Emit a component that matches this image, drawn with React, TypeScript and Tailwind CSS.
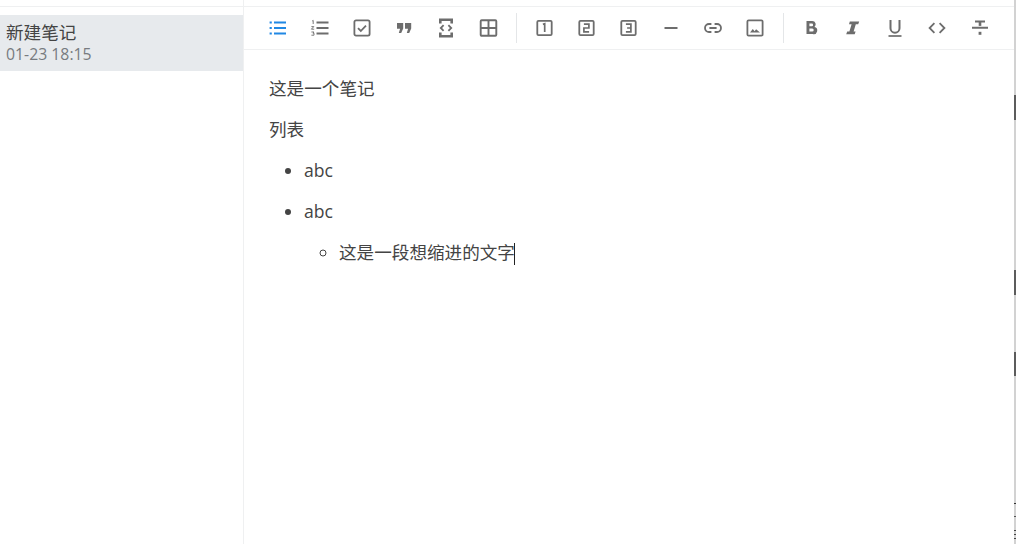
const font = { fontFamily: '"Open Sans", "Noto Sans CJK SC", sans-serif' };

function Ic({ children, blue }: { children: React.ReactNode; blue?: boolean }) {
  return (
    <button className={`flex h-[42px] w-[42.1px] shrink-0 items-center justify-center ${blue ? "text-[#2188e4]" : "text-[#6d6d6d]"}`}>
      <svg viewBox="0 0 20 20" className="h-5 w-5" fill="none" stroke="currentColor" strokeWidth="1.8">
        {children}
      </svg>
    </button>
  );
}

function BoxNum({ d }: { d: string }) {
  return (
    <Ic>
      <rect x="2.3" y="2.8" width="14.4" height="14.4" rx="1.2" />
      <path d={d} strokeWidth="1.7" transform="translate(-0.5 0)" />
    </Ic>
  );
}

function Sep() {
  return <div className="mx-[6.5px] h-[30px] w-px shrink-0 bg-[#e4e6e8]" />;
}

export default function App() {
  return (
    <div className="relative flex h-[544px] w-[1016px] overflow-hidden bg-white" style={font}>
      <aside className="w-[244px] shrink-0 border-r border-[#eff0f1] pt-[6px]">
        <div className="h-[9px] border-t border-[#eff0f1]" />
        <div className="h-[56px] w-[243px] bg-[#e7eaed] pl-[6px] pt-[5px]">
          <div className="text-[17.6px] leading-[24px] text-[#444]">新建笔记</div>
          <div className="text-[15.8px] leading-[20px] text-[#777b80]">01-23 18:15</div>
        </div>
      </aside>
      <main className="flex min-w-0 flex-1 flex-col">
        <div className="mt-[6px] flex h-[44px] items-center border-y border-[#eff0f1] pl-[13px]">
          <Ic blue>
            <path d="M6 4.5H18M6 10H18M6 15.5H18" strokeWidth="2" />
            <path d="M1.6 4.5h2.2M1.6 10h2.2M1.6 15.5h2.2" strokeWidth="2.2" />
          </Ic>
          <Ic>
            <path d="M6.5 4.5H18.5M6.5 10H18.5M6.5 15.5H18.5" strokeWidth="2" />
            <path d="M2.2 3l1-.6v3.6M1.4 8.6h2.4l-2.4 2.6h2.8M1.4 14h2.6l-1 1.2h1v2H1.4" strokeWidth="0.9" />
          </Ic>
          <Ic>
            <rect x="2.4" y="2.4" width="15.2" height="15.2" rx="1.6" />
            <path d="M6 10.2l2.8 2.8 5.2-5.4" />
          </Ic>
          <Ic>
            <path d="M3 5h6.2v5.6L7.2 15H4.8l1.3-4.2H3zM11 5h6.2v5.6L15.2 15h-2.4l1.3-4.2H11z" fill="currentColor" stroke="none" />
          </Ic>
          <Ic>
            <path d="M3 0.5h14v5h-2.6V3H5.6v2.5H3zM3 19.5h14v-5h-2.6V17H5.6v-2.5H3z" fill="currentColor" stroke="none" />
            <path d="M7.6 7.2L4.8 10l2.8 2.8M12.4 7.2l2.8 2.8-2.8 2.8" />
          </Ic>
          <Ic>
            <rect x="1.7" y="2.2" width="15.6" height="15.6" rx="1" strokeWidth="1.9" />
            <path d="M9.5 2.2v15.6M1.7 10h15.6" strokeWidth="1.9" />
          </Ic>
          <Sep />
          <BoxNum d="M8.4 6.4l1.8-.6V14" />
          <BoxNum d="M7.4 6.2h5v3.8h-5v3.8h5.2" />
          <BoxNum d="M7.4 6.2h5v7.6h-5M8.6 10h3.8" />
          <Ic>
            <path d="M3.5 10h13" strokeWidth="2" />
          </Ic>
          <Ic>
            <path d="M8.4 6H6a4 4 0 000 8h2.4M11.6 6H14a4 4 0 010 8h-2.4M6.4 10h7.2" />
          </Ic>
          <Ic>
            <rect x="2.4" y="2.4" width="15.2" height="15.2" rx="1.2" />
            <path d="M5 14.5l2.8-3.4 1.8 2.1 1.5-2 3.9 3.3z" fill="currentColor" stroke="none" />
          </Ic>
          <Sep />
          <Ic>
            <path d="M5.5 3h5.8a3.4 3.4 0 012.2 6 3.6 3.6 0 01-1.8 7H5.5zM8.4 5.6v2.6h2.4a1.3 1.3 0 000-2.6zM8.4 10.6v3h2.8a1.5 1.5 0 000-3z" fill="currentColor" stroke="none" fillRule="evenodd" />
          </Ic>
          <Ic>
            <path d="M6.8 3.5h9.4l-1 2.8h-2.4L10.6 13.4h2l-.9 2.8H3.2l1-2.8h2.2l2.2-7.1H6z" fill="currentColor" stroke="none" />
          </Ic>
          <Ic>
            <path d="M5.5 2v8.2a4.5 4.5 0 009 0V2" strokeWidth="2" />
            <path d="M3.5 18h13" strokeWidth="1.7" />
          </Ic>
          <Ic>
            <path d="M7.4 5.2L2.6 10l4.8 4.8M12.6 5.2l4.8 4.8-4.8 4.8" strokeWidth="1.8" />
          </Ic>
          <Ic>
            <path d="M5 3.5h10M2 9.8h16" strokeWidth="1.9" />
            <path d="M10 3.5v4.4" strokeWidth="2.6" />
            <path d="M10 13.8v3" strokeWidth="2.8" />
          </Ic>
        </div>
        <div className="flex-1 px-[25px] pt-[26px] text-[17.6px] leading-[24px] text-[#444]">
          <p className="mb-[17px]">这是一个笔记</p>
          <p className="mb-[17px]">列表</p>
          <ul className="list-disc pl-[35px]">
            <li className="mb-[17px]">abc</li>
            <li className="mb-[17px]">
              abc
              <ul className="mt-[17px] list-[circle] pl-[35px]">
                <li>
                  这是一段想缩进的文字
                  <span className="-ml-px inline-block h-[22px] w-px bg-[#222] align-middle" />
                </li>
              </ul>
            </li>
          </ul>
        </div>
      </main>
      {/* window edge strip with the dark marks */}
      <div className="absolute inset-y-0 right-0 w-[2px] bg-[#d2d2d2]">
        <div className="absolute top-[95px] h-[25px] w-full bg-[#5c5c5c]" />
        <div className="absolute top-[270px] h-[25px] w-full bg-[#5c5c5c]" />
        <div className="absolute top-[352px] h-[24px] w-full bg-[#5c5c5c]" />
        <div className="absolute top-[503px] h-px w-full bg-[#333]" />
        <div className="absolute top-[516px] h-px w-full bg-[#555]" />
        <div className="absolute top-[530px] h-px w-full bg-[#444]" />
        <div className="absolute top-[534px] h-px w-full bg-[#444]" />
        <div className="absolute top-[538px] h-px w-full bg-[#444]" />
      </div>
    </div>
  );
}
